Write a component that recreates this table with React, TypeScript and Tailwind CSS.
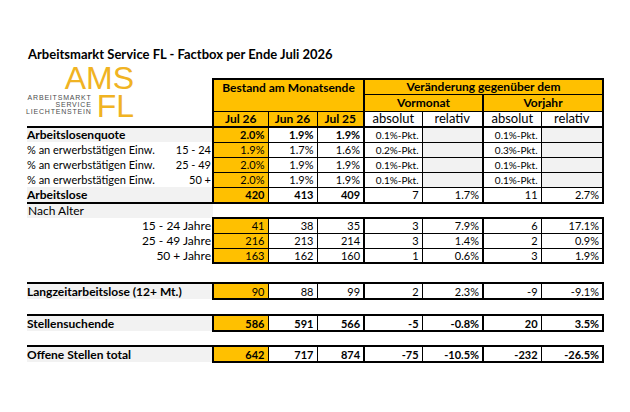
import React from 'react';

type Row = {
  label: string;
  range?: string;
  values: string[];
};

const pctRows: Row[] = [
  { label: '% an erwerbstätigen Einw.', range: '15 - 24', values: ['1.9%', '1.7%', '1.6%', '0.2%-Pkt.', '', '0.3%-Pkt.', ''] },
  { label: '% an erwerbstätigen Einw.', range: '25 - 49', values: ['2.0%', '1.9%', '1.9%', '0.1%-Pkt.', '', '0.1%-Pkt.', ''] },
  { label: '% an erwerbstätigen Einw.', range: '50 +', values: ['2.0%', '1.9%', '1.9%', '0.1%-Pkt.', '', '0.1%-Pkt.', ''] },
];

const ageRows: Row[] = [
  { label: '15 - 24 Jahre', values: ['41', '38', '35', '3', '7.9%', '6', '17.1%'] },
  { label: '25 - 49 Jahre', values: ['216', '213', '214', '3', '1.4%', '2', '0.9%'] },
  { label: '50 + Jahre', values: ['163', '162', '160', '1', '0.6%', '3', '1.9%'] },
];

// column specific classes: Jul 26 is yellow, group edges are thick
const colClass = [
  'bg-[#FFC000] border-l-2',
  '',
  'border-r-2',
  '',
  'border-r-2',
  '',
  'border-r-2',
];

const DataCells: React.FC<{
  values: string[];
  bold?: boolean;
  edge?: string;
  grayEmpty?: boolean;
  pkt?: boolean;
}> = ({ values, bold, edge = '', grayEmpty, pkt }) => (
  <>
    {values.map((v, i) => {
      const isPkt = pkt && (i === 3 || i === 5);
      const gray = grayEmpty && v === '' ? 'bg-[#F2F2F2]' : '';
      return (
        <td
          key={i}
          className={`border border-black px-[3px] text-right leading-none ${colClass[i]} ${gray} ${edge} ${
            bold ? 'font-bold' : 'font-normal'
          } ${isPkt ? 'text-[10px]' : 'text-[11px]'}`}
        >
          {v}
        </td>
      );
    })}
  </>
);

const Logo: React.FC = () => (
  <div className="-mt-[15px] flex w-[107px] flex-col items-end font-['Liberation_Sans',Arial,sans-serif] text-[#F0B323]">
    <div className="text-[32px] leading-[28px]">AMS</div>
    <div className="flex items-start gap-[5px]">
      <div className="mt-[2px] text-right text-[7px] leading-[7px] tracking-[0.8px] text-[#4d4d4d]">
        <div>ARBEITSMARKT</div>
        <div>SERVICE</div>
        <div>LIECHTENSTEIN</div>
      </div>
      <div className="text-[32px] leading-[28px]">FL</div>
    </div>
  </div>
);

const Spacer: React.FC<{ h: string }> = ({ h }) => (
  <tr className={h}>
    <td colSpan={9} />
  </tr>
);

export default function App() {
  return (
    <div className="h-[412px] w-[630px] overflow-hidden bg-white font-['Lato',sans-serif] text-black">
      <h1 className="pl-[28px] pt-[45px] text-[13px] font-bold leading-[18px]">
        Arbeitsmarkt Service FL - Factbox per Ende Juli 2026
      </h1>

      <table className="ml-[27px] mt-[15px] w-[576px] table-fixed border-collapse">
        <colgroup>
          <col className="w-[143px]" />
          <col className="w-[43px]" />
          <col className="w-[55px]" />
          <col className="w-[49px]" />
          <col className="w-[47px]" />
          <col className="w-[58px]" />
          <col className="w-[61px]" />
          <col className="w-[58px]" />
          <col className="w-[62px]" />
        </colgroup>
        <thead>
          <tr className="h-[15px]">
            <td rowSpan={3} colSpan={2} className="border-b-2 border-black p-0 align-top">
              <Logo />
            </td>
            <td
              rowSpan={2}
              colSpan={3}
              className="border-2 border-b border-black bg-[#FFC000] pt-[1px] text-center align-top text-[12px] font-bold leading-[14px]"
            >
              Bestand am Monatsende
            </td>
            <td colSpan={4} className="border-2 border-b border-black bg-[#FFC000] text-center text-[12px] font-bold leading-none">
              Veränderung gegenüber dem
            </td>
          </tr>
          <tr className="h-[17px]">
            <td colSpan={2} className="border border-r-2 border-black bg-[#FFC000] text-center text-[12px] font-bold leading-none">
              Vormonat
            </td>
            <td colSpan={2} className="border border-r-2 border-black bg-[#FFC000] text-center text-[12px] font-bold leading-none">
              Vorjahr
            </td>
          </tr>
          <tr className="h-[16px]">
            <td className="border border-b-2 border-l-2 border-black bg-[#FFC000] text-center text-[12px] font-bold leading-none">Jul 26</td>
            <td className="border border-b-2 border-black bg-[#FFC000] text-center text-[12px] font-bold leading-none">Jun 26</td>
            <td className="border border-b-2 border-r-2 border-black bg-[#FFC000] text-center text-[12px] font-bold leading-none">Jul 25</td>
            <td className="border border-b-2 border-black text-center text-[13px] leading-none">absolut</td>
            <td className="border border-b-2 border-r-2 border-black text-center text-[13px] leading-none">relativ</td>
            <td className="border border-b-2 border-black text-center text-[13px] leading-none">absolut</td>
            <td className="border border-b-2 border-r-2 border-black text-center text-[13px] leading-none">relativ</td>
          </tr>
        </thead>
        <tbody>
          {/* Arbeitslosenquote */}
          <tr className="h-[15px]">
            <td colSpan={2} className="bg-[#F2F2F2] text-[12px] font-bold leading-none">
              Arbeitslosenquote
            </td>
            <td className="border border-l-2 border-black bg-[#FFC000] px-[3px] text-right text-[11px] font-bold leading-none">2.0%</td>
            <td className="border border-black px-[3px] text-right text-[11px] font-bold leading-none">1.9%</td>
            <td className="border border-r-2 border-black px-[3px] text-right text-[11px] font-bold leading-none">1.9%</td>
            <td className="border border-black px-[3px] text-right text-[10px] leading-none">0.1%-Pkt.</td>
            <td className="border border-r-2 border-black bg-[#F2F2F2]" />
            <td className="border border-black px-[3px] text-right text-[10px] leading-none">0.1%-Pkt.</td>
            <td className="border border-r-2 border-black bg-[#F2F2F2]" />
          </tr>
          {pctRows.map((r) => (
            <tr key={r.range} className="h-[15px]">
              <td className="text-[11px] leading-none">{r.label}</td>
              <td className="pr-[1px] text-right text-[11px] leading-none">{r.range}</td>
              <DataCells values={r.values} grayEmpty pkt />
            </tr>
          ))}
          {/* Arbeitslose */}
          <tr className="h-[16px]">
            <td colSpan={2} className="border-b-2 border-black bg-[#F2F2F2] text-[12px] font-bold leading-none">
              Arbeitslose
            </td>
            <td className="border border-b-2 border-l-2 border-black bg-[#FFC000] px-[3px] text-right text-[11px] font-bold leading-none">420</td>
            <td className="border border-b-2 border-black px-[3px] text-right text-[11px] font-bold leading-none">413</td>
            <td className="border border-b-2 border-r-2 border-black px-[3px] text-right text-[11px] font-bold leading-none">409</td>
            <td className="border border-b-2 border-black px-[3px] text-right text-[11px] leading-none">7</td>
            <td className="border border-b-2 border-r-2 border-black px-[3px] text-right text-[11px] leading-none">1.7%</td>
            <td className="border border-b-2 border-black px-[3px] text-right text-[11px] leading-none">11</td>
            <td className="border border-b-2 border-r-2 border-black px-[3px] text-right text-[11px] leading-none">2.7%</td>
          </tr>
          <tr className="h-[15px]">
            <td colSpan={2} className="bg-[#F2F2F2] pl-[1px] text-[12px] leading-none">
              Nach Alter
            </td>
            <td colSpan={7} />
          </tr>
          {ageRows.map((r, i) => (
            <tr key={r.label} className="h-[15px]">
              <td colSpan={2} className="pr-[1px] text-right text-[12px] leading-none">
                {r.label}
              </td>
              <DataCells values={r.values} edge={i === 0 ? 'border-t-2' : i === 2 ? 'border-b-2' : ''} />
            </tr>
          ))}
          <Spacer h="h-[20px]" />
          <tr className="h-[16px]">
            <td colSpan={2} className="border-t-2 border-black bg-[#F2F2F2] text-[12px] font-bold leading-none">
              Langzeitarbeitslose (12+ Mt.)
            </td>
            <DataCells values={['90', '88', '99', '2', '2.3%', '-9', '-9.1%']} edge="border-t-2 border-b-2" />
          </tr>
          <Spacer h="h-[16px]" />
          <tr className="h-[16px]">
            <td colSpan={2} className="border-t-2 border-black bg-[#F2F2F2] text-[12px] font-bold leading-none">
              Stellensuchende
            </td>
            <DataCells values={['586', '591', '566', '-5', '-0.8%', '20', '3.5%']} bold edge="border-t-2 border-b-2" />
          </tr>
          <Spacer h="h-[15px]" />
          <tr className="h-[16px]">
            <td colSpan={2} className="border-t-2 border-black bg-[#F2F2F2] text-[12px] font-bold leading-none">
              Offene Stellen total
            </td>
            <DataCells values={['642', '717', '874', '-75', '-10.5%', '-232', '-26.5%']} bold edge="border-t-2 border-b-2" />
          </tr>
        </tbody>
      </table>
    </div>
  );
}
